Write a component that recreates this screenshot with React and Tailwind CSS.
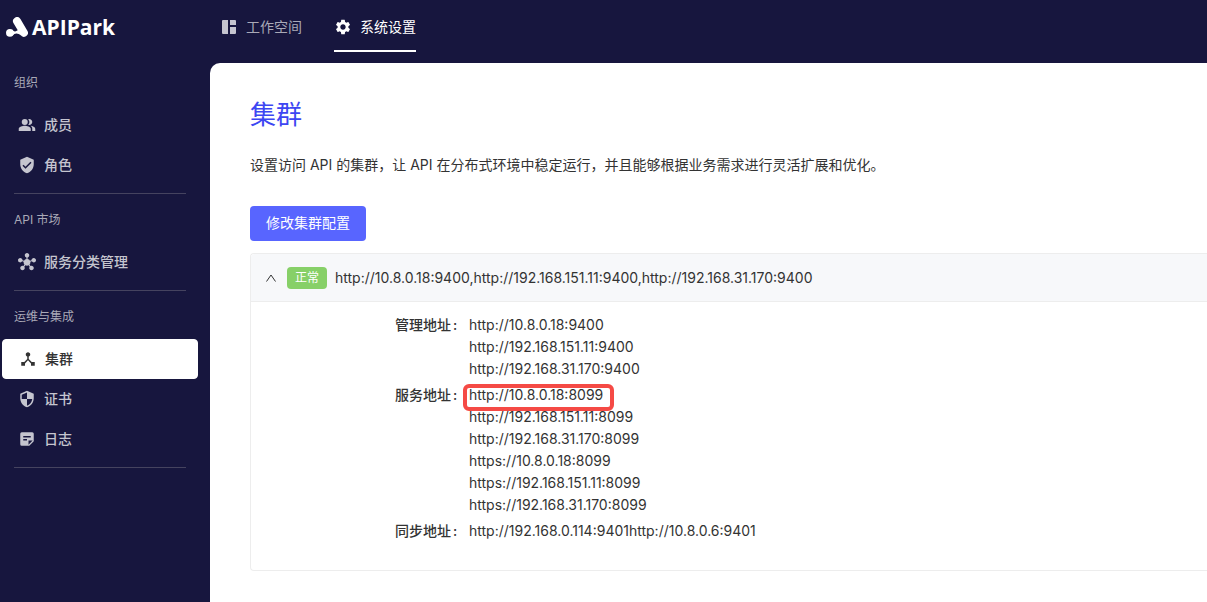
import { MdSettings, MdPeopleAlt, MdVerifiedUser, MdHub, MdDeviceHub, MdSecurity } from 'react-icons/md';

function DashboardIcon({ className }) {
  return (
    <svg viewBox="0 0 18 18" className={className} fill="currentColor" aria-hidden="true">
      <path d="M3 2h5v14H3a1 1 0 0 1-1-1V3a1 1 0 0 1 1-1zM10 2h5a1 1 0 0 1 1 1v4h-6zM10 9h6v6a1 1 0 0 1-1 1h-5z" />
    </svg>
  );
}

function NoteIcon({ className }) {
  return (
    <svg viewBox="0 0 24 24" className={className} fill="currentColor" fillRule="evenodd" aria-hidden="true">
      <path d="M5 3h14a2 2 0 0 1 2 2v10l-6 6H5a2 2 0 0 1-2-2V5a2 2 0 0 1 2-2zM7 8v2h10V8zM7 12v2h5v-2zM14 19.500l5.500-5.500H14z" />
    </svg>
  );
}

function Logo() {
  return (
    <a href="#" className="flex items-center gap-1 text-white" aria-label="APIPark">
      <svg viewBox="0 0 22 20" className="h-5 w-[22px]" aria-hidden="true">
        <path d="M11 4.100L17.900 15.700" stroke="currentColor" strokeWidth="8" strokeLinecap="round" />
        <circle cx="3.900" cy="15.800" r="3.900" fill="currentColor" />
        <path d="M6 12.500C8 15.400 10.500 14.600 12.500 12.500L15.500 18.700C11.500 15.800 9 15.800 6.500 18.600z" fill="currentColor" />
      </svg>
      <span className="text-[21px] leading-[26px] font-bold font-['Open_Sans',sans-serif]">APIPark</span>
    </a>
  );
}

const groups = [
  { title: '组织', items: [{ label: '成员', Icon: MdPeopleAlt }, { label: '角色', Icon: MdVerifiedUser }] },
  { title: 'API 市场', items: [{ label: '服务分类管理', Icon: MdHub }] },
  {
    title: '运维与集成',
    items: [
      { label: '集群', Icon: MdDeviceHub, active: true },
      { label: '证书', Icon: MdSecurity },
      { label: '日志', Icon: NoteIcon },
    ],
  },
];

const addresses = [
  { label: '管理地址', urls: ['http://10.8.0.18:9400', 'http://192.168.151.11:9400', 'http://192.168.31.170:9400'] },
  {
    label: '服务地址',
    marked: 'http://10.8.0.18:8099',
    urls: [
      'http://10.8.0.18:8099',
      'http://192.168.151.11:8099',
      'http://192.168.31.170:8099',
      'https://10.8.0.18:8099',
      'https://192.168.151.11:8099',
      'https://192.168.31.170:8099',
    ],
  },
  { label: '同步地址', urls: ['http://192.168.0.114:9401http://10.8.0.6:9401'] },
];

function Sidebar() {
  return (
    <nav className="w-[210px] shrink-0 text-[#c5c5cf]">
      {groups.map((group) => (
        <section key={group.title} className="mb-1.5">
          <h2 className="px-3.5 py-2.5 text-xs leading-5 font-normal text-[#a9a9b7]">{group.title}</h2>
          <ul className="mt-0.5 mr-3 ml-0.5">
            {group.items.map(({ label, Icon, active }) => (
              <li key={label}>
                <a
                  href="#"
                  aria-current={active ? 'page' : undefined}
                  className={
                    active
                      ? 'flex h-10 items-center gap-2 rounded border border-white bg-white px-4 text-sm font-medium text-[#333333]'
                      : 'flex h-10 items-center gap-2 px-4 text-sm font-medium'
                  }
                >
                  <Icon className="size-[18px]" />
                  {label}
                </a>
              </li>
            ))}
          </ul>
          <hr className="mt-2 mr-6 ml-3.5 border-[#45435f]" />
        </section>
      ))}
    </nav>
  );
}

export default function App() {
  return (
    <div className="flex min-h-screen flex-col overflow-hidden bg-[#17163e] font-[Inter,'Noto_Sans_CJK_SC',sans-serif]">
      <header className="flex h-[63px] items-start">
        <div className="w-[210px] shrink-0 pt-3.5 pl-1.5">
          <Logo />
        </div>
        <nav className="flex gap-8 pl-2.5 text-sm">
          <a href="#" className="flex h-[52px] items-center gap-2 border-b-2 border-transparent pt-1 text-[#a9a9b7]">
            <DashboardIcon className="size-[18px] text-[#c5c5cf]" />
            工作空间
          </a>
          <a href="#" aria-current="page" className="flex h-[52px] items-center gap-2 border-b-2 border-white pt-1 text-white">
            <MdSettings className="size-[18px]" />
            系统设置
          </a>
        </nav>
      </header>
      <div className="flex flex-1">
        <Sidebar />
        <main className="min-w-0 flex-1 rounded-tl-[10px] bg-white pt-[34px] pl-10 text-sm text-[#333333]">
          <h1 className="text-[26px] leading-9 font-normal text-[#3d46f2]">集群</h1>
          <p className="mt-[21px] leading-[22px]">
            设置访问 API 的集群，让 API 在分布式环境中稳定运行，并且能够根据业务需求进行灵活扩展和优化。
          </p>
          <button type="button" className="mt-[30px] flex h-[35px] items-center rounded bg-[#5865ff] px-4 pb-0.5 text-white">
            修改集群配置
          </button>
          <section className="mt-3 rounded-l border border-r-0 border-[#ededed]">
            <button type="button" aria-expanded="true" className="flex h-[47px] w-full items-center gap-2 rounded-tl bg-[#f7f8fa] pl-3.5 text-left">
              <svg viewBox="0 0 12 12" className="mr-0.5 size-3" fill="none" stroke="currentColor" aria-hidden="true">
                <path d="M1.500 9.500L6 3L10.500 9.500" />
              </svg>
              <span className="rounded bg-[#87d068] px-2 text-xs leading-[22px] text-white">正常</span>
              <span>http://10.8.0.18:9400,http://192.168.151.11:9400,http://192.168.31.170:9400</span>
            </button>
            <dl className="flex flex-col gap-1 border-t border-[#ededed] pt-3 pb-7">
              {addresses.map(({ label, urls, marked }) => (
                <div key={label} className="flex leading-[22px]">
                  <dt className="w-[218px] shrink-0 pr-2.5 text-right font-medium">
                    {label}<span className="inline-block w-2 text-center">:</span>
                  </dt>
                  <dd>
                    {urls.map((url) => (
                      <div key={url} className="relative w-fit">
                        {url}
                        {url === marked && <span className="absolute top-0 -right-[11px] -left-1.5 h-[27px] rounded-md border-4 border-[#f54a45]" />}
                      </div>
                    ))}
                  </dd>
                </div>
              ))}
            </dl>
          </section>
        </main>
      </div>
    </div>
  );
}
